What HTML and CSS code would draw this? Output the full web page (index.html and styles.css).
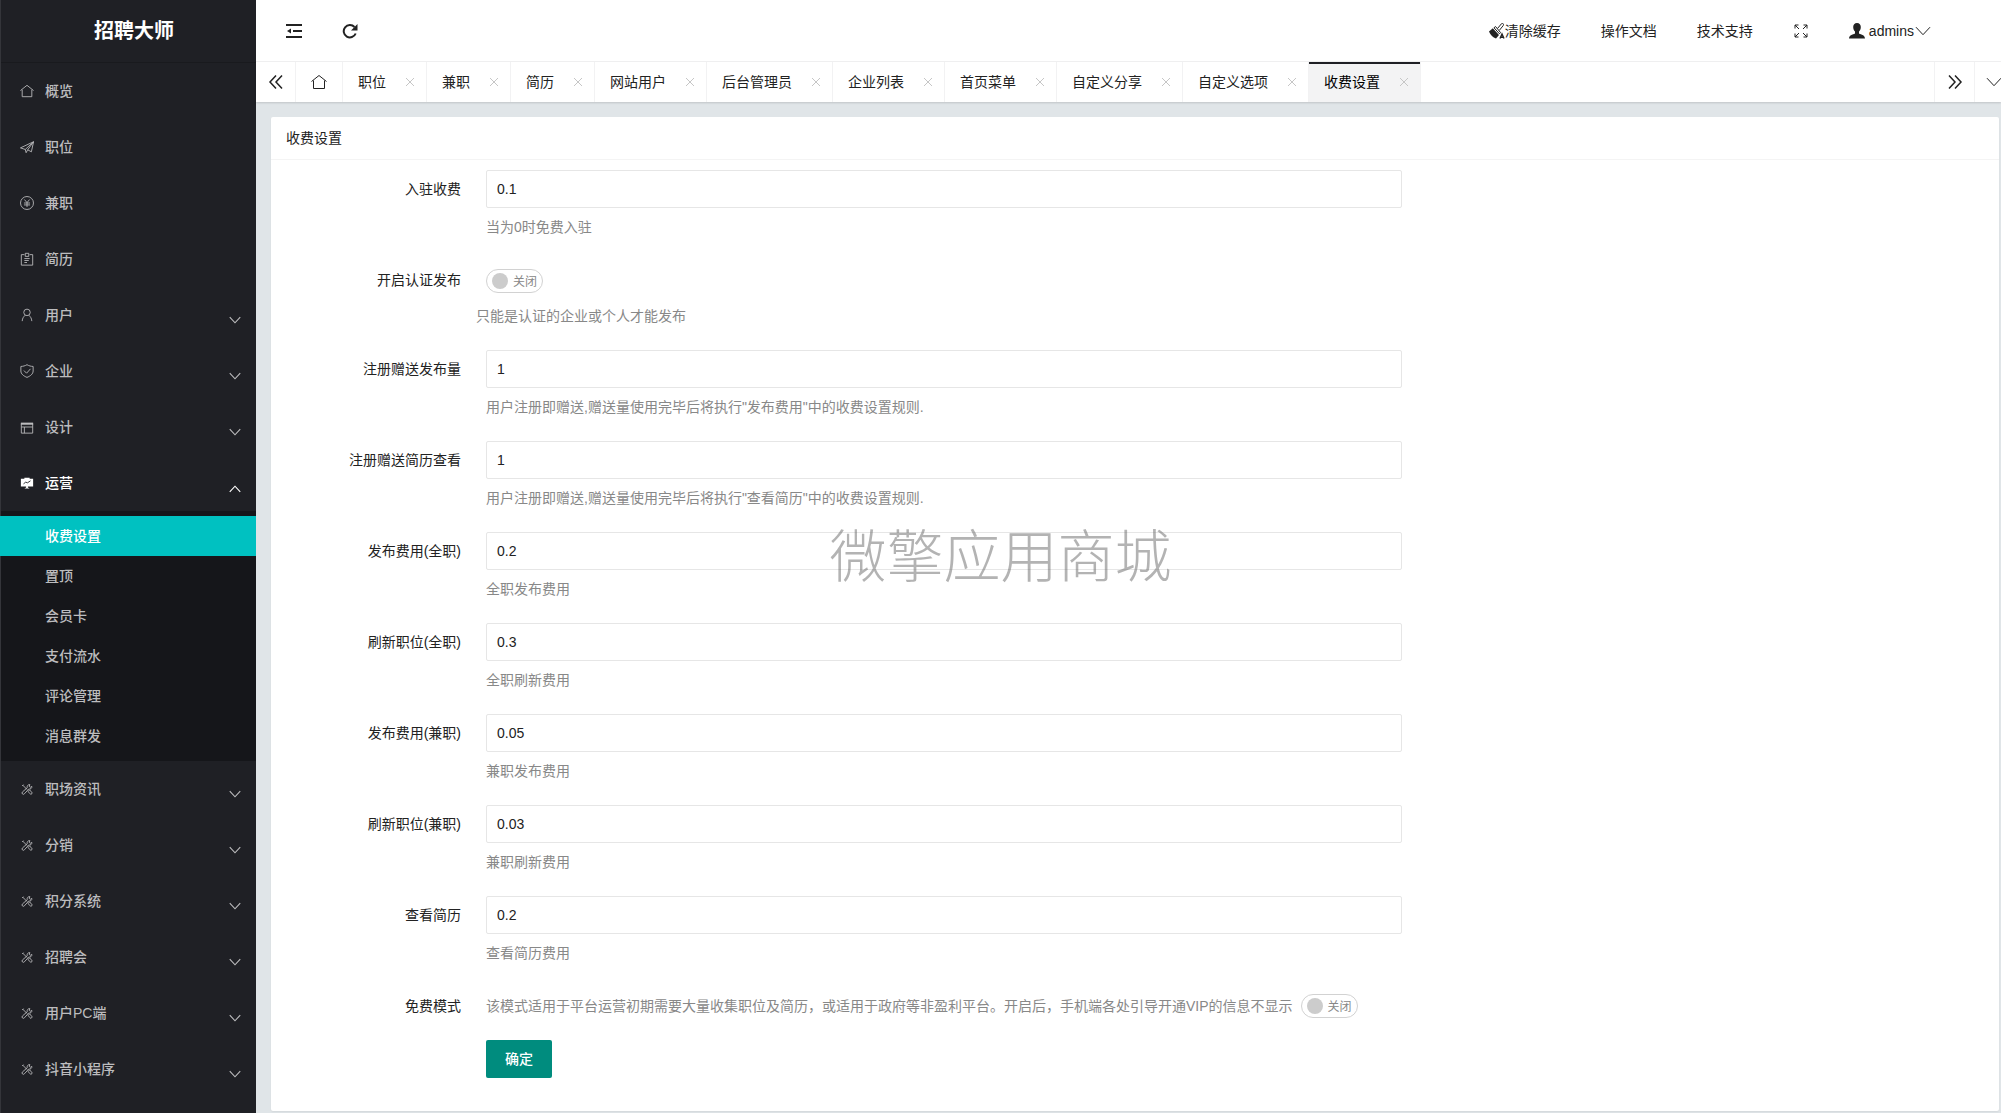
FILE: index.html
```html
<!DOCTYPE html>
<html lang="zh-CN">
<head>
<meta charset="utf-8">
<title>收费设置 - 招聘大师</title>
<meta name="viewport" content="width=device-width, initial-scale=1">
<link rel="stylesheet" href="styles.css">
</head>
<body>
<svg class="sprite" aria-hidden="true">
  <symbol id="i-home" viewBox="0 0 16 16"><path d="M.5 7.500 8 1.500l7.500 6M2.500 6.500v8h11v-8"/></symbol>
  <symbol id="i-plane" viewBox="0 0 16 16"><path d="M.5 9 15.500 2 13 13.500 8.800 11.200 7 14.500 6 10.800.5 9M6 10.800l9.500-8.800-6.700 9.200"/></symbol>
  <symbol id="i-yen" viewBox="0 0 16 16"><circle cx="8" cy="8" r="7.400"/><path d="M5 4l3 3.500L11 4M4.500 8h7M4.500 10.200h7M8 7.500V12.500"/></symbol>
  <symbol id="i-board" viewBox="0 0 16 16"><path d="M5 3H1.500v12h13V3h-3.500M6 1.500h4v3.500H6zM5 7.500h6M5 9.700h5M5 12h3"/></symbol>
  <symbol id="i-user" viewBox="0 0 16 16"><circle cx="8" cy="5" r="3.700"/><path d="M2.500 15c.2-3.500 1.700-5 3.500-6.800M13.500 15C13.300 11.500 11.800 10 10 8.200"/></symbol>
  <symbol id="i-shield" viewBox="0 0 16 16"><path d="M8 .8c2.200 1.300 4.500 1.900 7 2v5.200c0 3.500-3.300 5.800-7 7.300-3.700-1.500-7-3.800-7-7.300V2.800C3.500 2.700 5.800 2.100 8 .8zM4.500 7.500l3 3L12 5.500"/></symbol>
  <symbol id="i-layout" viewBox="0 0 16 16"><path d="M1.500 4h13v11h-13zM1.500 8h13M5 8v7"/><path class="solid" d="M1 3h14v2.400H1z"/></symbol>
  <symbol id="i-chart" viewBox="0 0 16 16"><path class="solid" d="M5 2h6v1h4v9H9v1l2 1.300H5l2-1.300v-1H1V3h4z"/><path class="cut" d="M4 9l2.500-2 2 .8L12 5.500"/></symbol>
  <symbol id="i-tools" viewBox="0 0 16 16"><path d="M3 3.500l5 5M2.500 4.500l1.500-1.500M9.500 10.500l1.500-1.500 3 3.500-1.500 1.800-3-3zM13.500 5a2.700 2.700 0 0 1-3.500 3L5 13.500a1.500 1.500 0 0 1-2.300-2L8.300 6.500a2.700 2.700 0 0 1 3-3.500L10.500 5 12 6z"/></symbol>
  <symbol id="i-down" viewBox="0 0 16 16"><path d="M1 4.200 8 11.700l7-7.500"/></symbol>
  <symbol id="i-left2" viewBox="0 0 16 16"><path d="M8 1.500 2 8l6 6.500M14 1.500 8 8l6 6.500"/></symbol>
  <symbol id="i-right2" viewBox="0 0 16 16"><path d="M2 1.500 8 8l-6 6.500M8 1.500 14 8l-6 6.500"/></symbol>
  <symbol id="i-close" viewBox="0 0 16 16"><path d="M4 4l8 8M12 4l-8 8"/></symbol>
  <symbol id="i-fold" viewBox="0 0 16 16"><path d="M0 2h16M7 8h9M0 14h16"/><path class="solid" d="M1 8l4-2.500v5z"/></symbol>
  <symbol id="i-refresh" viewBox="0 0 16 16"><path d="M13.700 10.500A6.200 6.200 0 1 1 12.500 4"/><path class="solid" d="M15.500 1v6.500H9z"/></symbol>
  <symbol id="i-brush" viewBox="0 0 16 16"><path class="solid" d="M0 8.500 3.800 5.200 10 12l-3 3.500C4 14.500 1.500 12 0 8.500z"/><path d="M5 4.800l1.500-1.300L11.500 9.500 10.500 10.800zM8.500 5.500l4-4.800c1.500-.8 2.600.5 1.700 1.900L10.300 7.400"/><path class="bold" d="M11 15.500l2-4.500 2 4.500M11.800 14.300h2.500"/></symbol>
  <symbol id="i-full" viewBox="0 0 16 16"><path d="M2 5.500V2h3.500M2 2l4 4M10.500 2H14v3.500M14 2l-4 4M2 10.500V14h3.500M2 14l4-4M10.500 14H14v-3.500M14 14l-4-4"/></symbol>
  <symbol id="i-admin" viewBox="0 0 16 16"><path class="solid" d="M8 0c2.500 0 3.800 1.700 3.800 4 0 2-.8 3.500-1.800 4.500v1.700c0 1.300 6 1 6 5.300H0c0-4.300 6-4 6-5.300V8.500C5 7.500 4.200 6 4.200 4 4.200 1.700 5.500 0 8 0z"/></symbol>
</svg>

<div class="app">
  <aside class="side">
    <h1 class="logo">招聘大师</h1>
    <nav class="menu">
      <a class="item" href="#"><svg class="ico"><use href="#i-home"/></svg><span>概览</span></a>
      <a class="item" href="#"><svg class="ico"><use href="#i-plane"/></svg><span>职位</span></a>
      <a class="item" href="#"><svg class="ico"><use href="#i-yen"/></svg><span>兼职</span></a>
      <a class="item" href="#"><svg class="ico"><use href="#i-board"/></svg><span>简历</span></a>
      <a class="item" href="#"><svg class="ico"><use href="#i-user"/></svg><span>用户</span><svg class="arrow"><use href="#i-down"/></svg></a>
      <a class="item" href="#"><svg class="ico"><use href="#i-shield"/></svg><span>企业</span><svg class="arrow"><use href="#i-down"/></svg></a>
      <a class="item" href="#"><svg class="ico"><use href="#i-layout"/></svg><span>设计</span><svg class="arrow"><use href="#i-down"/></svg></a>
      <a class="item open" href="#"><svg class="ico"><use href="#i-chart"/></svg><span>运营</span><svg class="arrow"><use href="#i-down"/></svg></a>
      <div class="sub">
        <a class="current" href="#">收费设置</a>
        <a href="#">置顶</a>
        <a href="#">会员卡</a>
        <a href="#">支付流水</a>
        <a href="#">评论管理</a>
        <a href="#">消息群发</a>
      </div>
      <a class="item" href="#"><svg class="ico"><use href="#i-tools"/></svg><span>职场资讯</span><svg class="arrow"><use href="#i-down"/></svg></a>
      <a class="item" href="#"><svg class="ico"><use href="#i-tools"/></svg><span>分销</span><svg class="arrow"><use href="#i-down"/></svg></a>
      <a class="item" href="#"><svg class="ico"><use href="#i-tools"/></svg><span>积分系统</span><svg class="arrow"><use href="#i-down"/></svg></a>
      <a class="item" href="#"><svg class="ico"><use href="#i-tools"/></svg><span>招聘会</span><svg class="arrow"><use href="#i-down"/></svg></a>
      <a class="item" href="#"><svg class="ico"><use href="#i-tools"/></svg><span>用户PC端</span><svg class="arrow"><use href="#i-down"/></svg></a>
      <a class="item" href="#"><svg class="ico"><use href="#i-tools"/></svg><span>抖音小程序</span><svg class="arrow"><use href="#i-down"/></svg></a>
    </nav>
  </aside>

  <div class="main">
    <header class="top">
      <div class="tools">
        <button class="tool" type="button" aria-label="收起菜单"><svg class="ico heavy"><use href="#i-fold"/></svg></button>
        <button class="tool" type="button" aria-label="刷新"><svg class="ico heavy"><use href="#i-refresh"/></svg></button>
      </div>
      <div class="links">
        <a href="#"><svg class="ico"><use href="#i-brush"/></svg>清除缓存</a>
        <a href="#">操作文档</a>
        <a href="#">技术支持</a>
        <button class="tool" type="button" aria-label="全屏"><svg class="ico"><use href="#i-full"/></svg></button>
        <a class="admin" href="#"><svg class="ico"><use href="#i-admin"/></svg><span>admins</span><svg class="ico"><use href="#i-down"/></svg></a>
      </div>
    </header>

    <div class="tabbar">
      <button class="ctl" type="button" aria-label="向左"><svg class="ico mid"><use href="#i-left2"/></svg></button>
      <a class="tab home" href="#" aria-label="首页"><svg class="ico"><use href="#i-home"/></svg></a>
      <div class="tabs">
        <div class="tab"><a href="#">职位</a><button type="button" aria-label="关闭"><svg><use href="#i-close"/></svg></button></div>
        <div class="tab"><a href="#">兼职</a><button type="button" aria-label="关闭"><svg><use href="#i-close"/></svg></button></div>
        <div class="tab"><a href="#">简历</a><button type="button" aria-label="关闭"><svg><use href="#i-close"/></svg></button></div>
        <div class="tab"><a href="#">网站用户</a><button type="button" aria-label="关闭"><svg><use href="#i-close"/></svg></button></div>
        <div class="tab"><a href="#">后台管理员</a><button type="button" aria-label="关闭"><svg><use href="#i-close"/></svg></button></div>
        <div class="tab"><a href="#">企业列表</a><button type="button" aria-label="关闭"><svg><use href="#i-close"/></svg></button></div>
        <div class="tab"><a href="#">首页菜单</a><button type="button" aria-label="关闭"><svg><use href="#i-close"/></svg></button></div>
        <div class="tab"><a href="#">自定义分享</a><button type="button" aria-label="关闭"><svg><use href="#i-close"/></svg></button></div>
        <div class="tab"><a href="#">自定义选项</a><button type="button" aria-label="关闭"><svg><use href="#i-close"/></svg></button></div>
        <div class="tab active"><a href="#">收费设置</a><button type="button" aria-label="关闭"><svg><use href="#i-close"/></svg></button></div>
      </div>
      <button class="ctl next" type="button" aria-label="向右"><svg class="ico mid"><use href="#i-right2"/></svg></button>
      <button class="ctl more" type="button" aria-label="更多"><svg class="ico"><use href="#i-down"/></svg></button>
    </div>

    <main class="card">
      <h2>收费设置</h2>
      <form>
        <div class="row"><label for="f1">入驻收费</label><div class="field"><input id="f1" type="text" value="0.1"><p>当为0时免费入驻</p></div></div>
        <div class="row toggle"><label for="f2">开启认证发布</label><div class="field"><span class="switch"><input id="f2" type="checkbox"><i></i><em>关闭</em></span><p>只能是认证的企业或个人才能发布</p></div></div>
        <div class="row"><label for="f3">注册赠送发布量</label><div class="field"><input id="f3" type="text" value="1"><p>用户注册即赠送,赠送量使用完毕后将执行"发布费用"中的收费设置规则.</p></div></div>
        <div class="row"><label for="f4">注册赠送简历查看</label><div class="field"><input id="f4" type="text" value="1"><p>用户注册即赠送,赠送量使用完毕后将执行"查看简历"中的收费设置规则.</p></div></div>
        <div class="row"><label for="f5">发布费用(全职)</label><div class="field"><input id="f5" type="text" value="0.2"><p>全职发布费用</p></div></div>
        <div class="row"><label for="f6">刷新职位(全职)</label><div class="field"><input id="f6" type="text" value="0.3"><p>全职刷新费用</p></div></div>
        <div class="row"><label for="f7">发布费用(兼职)</label><div class="field"><input id="f7" type="text" value="0.05"><p>兼职发布费用</p></div></div>
        <div class="row"><label for="f8">刷新职位(兼职)</label><div class="field"><input id="f8" type="text" value="0.03"><p>兼职刷新费用</p></div></div>
        <div class="row"><label for="f9">查看简历</label><div class="field"><input id="f9" type="text" value="0.2"><p>查看简历费用</p></div></div>
        <div class="row inline"><label for="f10">免费模式</label><div class="field"><span>该模式适用于平台运营初期需要大量收集职位及简历，或适用于政府等非盈利平台。开启后，手机端各处引导开通VIP的信息不显示</span><span class="switch"><input id="f10" type="checkbox"><i></i><em>关闭</em></span></div></div>
        <div class="row submit"><button type="submit">确定</button></div>
      </form>
    </main>
  </div>
</div>
<div class="watermark">微擎应用商城</div>
</body>
</html>
```
FILE: styles.css
```css
* { box-sizing: border-box; }

body {
  margin: 0;
  color: #222;
  background: #e0e5e8;
  font: 14px/24px "Liberation Sans", "Noto Sans CJK SC", sans-serif;
}

a { color: inherit; text-decoration: none; }
h1, h2, p { margin: 0; font-weight: 400; }

button, input { font: inherit; color: inherit; }
button { padding: 0; border: 0; background: none; cursor: pointer; }

.sprite { display: none; }

svg { fill: none; stroke: currentColor; stroke-width: 1; flex: none; }
.solid { fill: currentColor; stroke: none; }
.cut { stroke: #1f2025; }
.bold { stroke-width: 1.4; }
.ico { width: 16px; height: 16px; }
.heavy { stroke-width: 2; }
.mid { stroke-width: 1.5; }

.app { display: flex; min-height: 100vh; }

/* Side menu */
.side {
  flex: none;
  width: 256px;
  color: #bcbcbe;
  background: #1f2025;
  border-left: 1px solid #34353a;
  font-weight: 500;
}

.logo {
  height: 63px;
  padding-left: 11px;
  border-bottom: 1px solid #191a1e;
  color: #fff;
  font-size: 20px;
  font-weight: 700;
  line-height: 63px;
  text-align: center;
}

.item {
  display: flex;
  align-items: center;
  height: 56px;
  padding: 0 15px 0 19px;
}
.item .ico { width: 14px; height: 14px; margin-right: 11px; }
.item .arrow { width: 12px; height: 12px; margin: 10px 0 0 auto; stroke-width: 1.5; }
.item.open { color: #fff; }
.open .arrow { margin-top: 12px; transform: rotate(180deg); }

.sub { padding: 5px 0; background: #15161a; }
.sub a { display: block; padding-left: 44px; line-height: 40px; }
.sub .current {
  margin-left: -1px;
  padding-left: 45px;
  color: #fff;
  background: #00c1c1;
}

/* Top bar */
.main { flex: 1; min-width: 0; display: flex; flex-direction: column; }

.top {
  display: flex;
  justify-content: space-between;
  height: 62px;
  padding: 0 70px 0 30px;
  border-bottom: 1px solid #f1f1f2;
  background: #fff;
}
.tools, .links, .links a { display: flex; align-items: center; }
.tools { gap: 40px; }
.links { gap: 40px; }
.links .tool { width: 16px; }
.tool { display: flex; }
.admin span { margin: 0 1px 0 4px; }

/* Page tabs */
.tabbar {
  display: flex;
  height: 40px;
  background: #fff;
  box-shadow: 0 1px 2px rgba(0, 0, 0, .15);
}
.ctl { display: flex; align-items: center; justify-content: center; width: 40px; border-right: 1px solid #f2f2f3; }
.next { border-left: 1px solid #f2f2f3; width: 41px; }
.more { width: 26px; border: 0; justify-content: flex-start; padding-left: 11px; overflow: hidden; }
.tabs { display: flex; flex: 1; min-width: 0; overflow: hidden; }

.tab {
  display: flex;
  align-items: center;
  padding: 0 8px 0 15px;
  border-right: 1px solid #f2f2f3;
  white-space: nowrap;
}
.home { width: 47px; padding: 0 15px; }
.tab button { display: flex; margin-left: 16px; color: #c6c6c6; }
.tab button svg { width: 16px; height: 16px; }
.tab.active { color: #000; background: #f3f3f4; box-shadow: inset 0 2px #1f2025; }

/* Settings card */
.card {
  flex: 1;
  margin: 15px 2px 2px 15px;
  border-radius: 2px;
  background: #fff;
  box-shadow: 0 1px 2px rgba(0, 0, 0, .06);
}
.card h2 {
  height: 43px;
  padding-left: 15px;
  border-bottom: 1px solid #f4f4f4;
  font-size: 14px;
  line-height: 42px;
}

form { padding: 10px 0 32px; }
.row { display: flex; gap: 25px; height: 91px; }
.row label { width: 190px; line-height: 38px; text-align: right; }
.field { width: 53%; }
.field input[type="text"] {
  display: block;
  width: 100%;
  height: 38px;
  padding: 0 10px;
  border: 1px solid #e6e6e6;
  border-radius: 2px;
  background: #fff;
  outline: 0;
}
.field p { padding-top: 7px; color: #888; }

.toggle { height: 89px; }
.toggle .switch { margin-top: 8px; }
.toggle p { margin-left: -10px; padding-top: 11px; }

.switch {
  position: relative;
  display: flex;
  align-items: center;
  gap: 5px;
  flex: none;
  width: 57px;
  height: 24px;
  padding-left: 5px;
  border: 1px solid #d2d2d2;
  border-radius: 20px;
  color: #888;
  background: #fff;
}
.switch input { position: absolute; inset: 0; width: 100%; height: 100%; margin: 0; opacity: 0; cursor: pointer; }
.switch i { width: 16px; height: 16px; border-radius: 50%; background: #ccc; }
.switch em { padding-top: 1px; font-size: 12px; font-style: normal; }

.inline { height: 53px; }
.inline .field { display: flex; align-items: center; gap: 8px; height: 38px; color: #888; white-space: nowrap; }

.submit { height: 38px; padding-left: 215px; }
.submit button {
  width: 66px;
  border-radius: 2px;
  color: #fff;
  background: #008c7e;
  font-weight: 500;
}

.watermark {
  position: fixed;
  top: 50%;
  left: 50%;
  transform: translate(-50%, -50%);
  color: rgba(110, 110, 110, .52);
  font-size: 57px;
  font-weight: 300;
  line-height: 60px;
  white-space: nowrap;
  pointer-events: none;
}
```
